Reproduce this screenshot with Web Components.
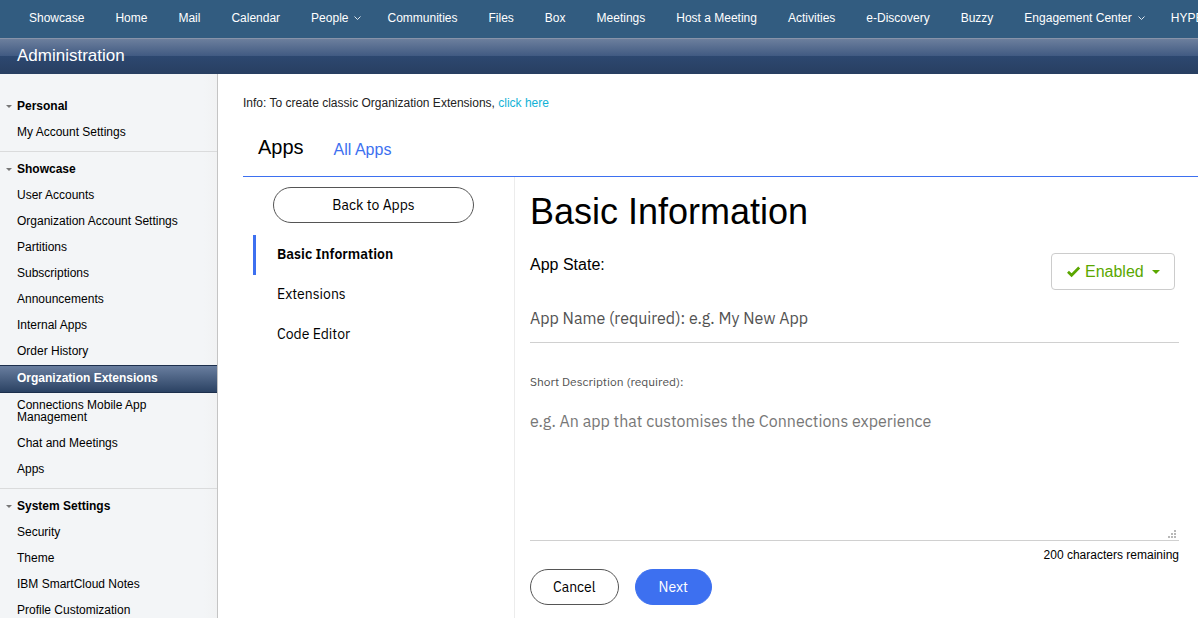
<!DOCTYPE html>
<html lang="en">
<head>
<meta charset="utf-8">
<title>Administration</title>
<style>
  html, body { margin: 0; height: 100%; }
  body { font-family: "Liberation Sans", Arial, sans-serif; font-size: 12px; color: #000; background: #fff; overflow: hidden;
    --plex: "IBM Plex Sans", "Noto Sans", sans-serif; --blue: #3d70f0; }
</style>
</head>
<body>
<admin-page></admin-page>

<template id="page-t">
  <style>
    :host { display: flex; flex-direction: column; min-height: 100vh; }
    .body { flex: 1; display: grid; grid-template-columns: 218px minmax(0, 1fr); }
    main { display: flex; flex-direction: column; padding: 21px 0 0 25px; }
    .info { margin: 0; line-height: 16px; color: #222; }
    .info a { color: #12b2d6; text-decoration: none; }
    .editor { flex: 1; display: grid; grid-template-columns: 272px minmax(0, 1fr); }
  </style>
  <top-nav></top-nav>
  <title-bar>Administration</title-bar>
  <div class="body">
    <side-bar>
      <nav-section heading="Personal">
        <nav-item>My Account Settings</nav-item>
      </nav-section>
      <nav-section heading="Showcase">
        <nav-item>User Accounts</nav-item>
        <nav-item>Organization Account Settings</nav-item>
        <nav-item>Partitions</nav-item>
        <nav-item>Subscriptions</nav-item>
        <nav-item>Announcements</nav-item>
        <nav-item>Internal Apps</nav-item>
        <nav-item>Order History</nav-item>
        <nav-item selected>Organization Extensions</nav-item>
        <nav-item>Connections Mobile App Management</nav-item>
        <nav-item>Chat and Meetings</nav-item>
        <nav-item>Apps</nav-item>
      </nav-section>
      <nav-section heading="System Settings">
        <nav-item>Security</nav-item>
        <nav-item>Theme</nav-item>
        <nav-item>IBM SmartCloud Notes</nav-item>
        <nav-item>Profile Customization</nav-item>
      </nav-section>
    </side-bar>
    <main>
      <p class="info">Info: To create classic Organization Extensions, <a href="#">click here</a></p>
      <app-tabs></app-tabs>
      <div class="editor">
        <step-list></step-list>
        <app-form></app-form>
      </div>
    </main>
  </div>
</template>

<template id="top-nav-t">
  <style>
    :host { display: block; background: #325c80; overflow: hidden; }
    nav { display: flex; gap: 31px; height: 38px; padding: 0 0 2px 29px; box-sizing: border-box; align-items: center; }
    a { color: #fff; text-decoration: none; white-space: nowrap; display: flex; align-items: center; gap: 6px; flex: none; }
    a:has(svg) { margin-right: -5px; }
    svg { width: 7px; height: 4px; }
  </style>
  <nav></nav>
</template>

<template id="title-bar-t">
  <style>
    :host { display: block; height: 36px; box-sizing: border-box; border-top: 1px solid #8793a9;
      background: linear-gradient(#6c7f9d 0, #415a82 17px, #2d4870 17px, #283f61 100%) padding-box; }
    h1 { margin: 0; padding-left: 17px; font-size: 17px; font-weight: 400; line-height: 34px; color: #fff; }
  </style>
  <h1><slot></slot></h1>
</template>

<template id="side-bar-t">
  <style>
    :host { display: block; height: 0; min-height: 100%; background: linear-gradient(90deg, #f3f5f7 204px, #f1f2f3); border-right: 1px solid #c4c4c4; padding-top: 15px; box-sizing: border-box; }
  </style>
  <nav><slot></slot></nav>
</template>

<template id="nav-section-t">
  <style>
    :host { display: block; padding: 4px 0 6px; border-bottom: 1px solid #dadbdc; }
    h2 { margin: 0; display: flex; align-items: center; gap: 5px; padding: 7px 6px; font-size: 12px; line-height: 12px; }
    svg { width: 6px; height: 3px; }
  </style>
  <h2><svg viewBox="0 0 6 3"><path d="M0 0h6L3 3z" fill="#777"/></svg><span></span></h2>
  <slot></slot>
</template>

<template id="nav-item-t">
  <style>
    :host { display: block; }
    a { display: block; padding: 7px 32px 7px 17px; line-height: 12px; color: #000; text-decoration: none; }
    :host([selected]) a { padding-top: 6px; padding-bottom: 8px; border: solid #1c2f4c; border-width: 1px 0; font-weight: 700; color: #fff;
      background: linear-gradient(#697e9f, #2b4263); }
    :host([selected]) { margin: 1px 0 -1px; }
  </style>
  <a href="#"><slot></slot></a>
</template>

<template id="app-tabs-t">
  <style>
    :host { display: flex; align-items: flex-end; gap: 30px; padding: 23px 15px 15px; border-bottom: 1px solid var(--blue); }
    h2 { margin: 0; font-size: 20px; font-weight: 400; line-height: 27px; }
    a { font-size: 16px; line-height: 22px; color: var(--blue); text-decoration: none; }
  </style>
  <h2>Apps</h2>
  <a href="#">All Apps</a>
</template>

<template id="pill-button-t">
  <style>
    :host { display: block; }
    button { width: 100%; height: 36px; padding: 0 22px 1px; border: 1px solid #555; border-radius: 18px; background: #fff; color: #000;
      font: 14px/20px var(--plex); }
    :host([primary]) button { padding: 0 23px 1px; background: var(--blue); border-color: var(--blue); color: #fff; }
  </style>
  <button type="button"><slot></slot></button>
</template>

<template id="step-list-t">
  <style>
    :host { display: block; padding: 10px 40px 0 10px; border-right: 1px solid #ececec; font: 14px/20px var(--plex); }
    pill-button { margin: 0 0 12px 20px; }
    a { display: block; padding: 9px 0 11px 21px; border-left: 3px solid transparent; line-height: 20px; color: #000; text-decoration: none; }
    a.on { border-color: var(--blue); font-weight: 600; }
  </style>
  <pill-button>Back to Apps</pill-button>
  <nav>
    <a class="on" href="#">Basic Information</a>
    <a href="#">Extensions</a>
    <a href="#">Code Editor</a>
  </nav>
</template>

<template id="state-select-t">
  <style>
    :host { display: flex; align-items: center; width: 124px; height: 37px; box-sizing: border-box; padding: 0 14px;
      border: 1px solid #ccc; border-radius: 4px; background: #fff; }
    select { appearance: none; flex: 1; min-width: 0; margin: 0; padding: 0 0 0 4px; border: 0; background: none; color: #5aa700;
      font: 16px/20px "Liberation Sans", Arial, sans-serif; }
    .check { width: 15px; height: 12px; }
    .caret { width: 8px; height: 4px; }
    svg { flex: none; }
  </style>
  <svg class="check" viewBox="0 0 15 12"><path d="M2 5.7l3.6 3.6L13.2 1.5" fill="none" stroke="#5aa700" stroke-width="2.7"/></svg>
  <select aria-label="App State"><option>Enabled</option></select>
  <svg class="caret" viewBox="0 0 8 4"><path d="M0 0h8L4 4z" fill="#5aa700"/></svg>
</template>

<template id="app-form-t">
  <style>
    :host { display: block; padding: 13px 19px 0 15px; }
    h2 { margin: 0; font-size: 36px; font-weight: 400; line-height: 44px; }
    .state { display: flex; justify-content: space-between; padding: 19px 4px 0 0; font-size: 16px; line-height: 24px; }
    input, textarea { display: block; width: 100%; box-sizing: border-box; margin: 0; border: 0; border-bottom: 1px solid #d0d0d0;
      border-radius: 0; padding: 0; background: none; font: 16px/24px var(--plex); outline: 0; }
    input { height: 53px; padding-top: 4px; }
    input::placeholder { color: #525252; opacity: 1; }
    textarea::placeholder { color: #777; opacity: 1; }
    label { display: block; margin-top: 31px; font: 12px/16px var(--plex); color: #525252; }
    .area { position: relative; margin-top: 12px; }
    textarea { height: 139px; padding-top: 7px; resize: none; }
    .grip { position: absolute; right: 3px; bottom: 3px; width: 8px; height: 8px; }
    .count { margin: 0; text-align: right; line-height: 14px; padding: 7px 0; }
    .actions { display: flex; gap: 16px; }
  </style>
  <h2>Basic Information</h2>
  <div class="state"><span>App State:</span><state-select></state-select></div>
  <input type="text" aria-label="App Name (required)" placeholder="App Name (required): e.g. My New App">
  <label for="desc">Short Description (required):</label>
  <div class="area">
    <textarea id="desc" placeholder="e.g. An app that customises the Connections experience"></textarea>
    <svg class="grip" viewBox="0 0 8 8"><path d="M6 0h2v2H6zM3 3h2v2H3zM6 3h2v2H6zM0 6h2v2H0zM3 6h2v2H3zM6 6h2v2H6z" fill="#b8b8b8"/></svg>
  </div>
  <p class="count">200 characters remaining</p>
  <div class="actions"><pill-button>Cancel</pill-button><pill-button primary>Next</pill-button></div>
</template>

<script>
  class Base extends HTMLElement {
    constructor() {
      super();
      const t = document.getElementById(this.localName.replace('admin-page', 'page') + '-t');
      this.attachShadow({ mode: 'open' }).append(t.content.cloneNode(true));
    }
  }
  const NAV = ['Showcase', 'Home', 'Mail', 'Calendar', 'People+', 'Communities', 'Files', 'Box', 'Meetings', 'Host a Meeting',
    'Activities', 'e-Discovery', 'Buzzy', 'Engagement Center+', 'HYPE'];
  customElements.define('top-nav', class extends Base {
    connectedCallback() {
      this.shadowRoot.querySelector('nav').innerHTML = NAV.map(n => '<a href="#">' + n.replace('+', '') + (n.endsWith('+')
        ? '<svg viewBox="0 0 7 4"><path d="M.5 .5l3 3 3-3" fill="none" stroke="#dfe7ee"/></svg>' : '') + '</a>').join('');
    }
  });
  customElements.define('nav-section', class extends Base {
    connectedCallback() { this.shadowRoot.querySelector('h2 span').textContent = this.getAttribute('heading'); }
  });
  ['title-bar', 'side-bar', 'nav-item', 'app-tabs', 'pill-button', 'step-list', 'state-select', 'app-form', 'admin-page']
    .forEach(n => customElements.define(n, class extends Base {}));
</script>
</body>
</html>
